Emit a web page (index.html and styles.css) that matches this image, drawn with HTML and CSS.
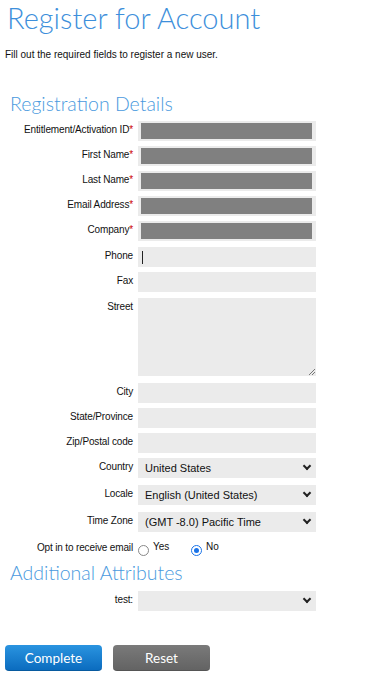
FILE: index.html
```html
<!DOCTYPE html>
<html lang="en">
<head>
    <meta charset="UTF-8">
    <meta name="viewport" content="width=device-width, initial-scale=1.0">
    <title>Register for Account</title>
    <link rel="stylesheet" href="styles.css">
</head>
<body>
    <h1 class="page-title">Register for Account</h1>
    <p class="intro">Fill out the required fields to register a new user.</p>

    <form class="reg-form">
        <h2 class="section-title">Registration Details</h2>

        <div class="form-row">
            <label>Entitlement/Activation ID<span class="req">*</span></label>
            <div class="field"><div class="redacted"></div></div>
        </div>
        <div class="form-row">
            <label>First Name<span class="req">*</span></label>
            <div class="field"><div class="redacted"></div></div>
        </div>
        <div class="form-row">
            <label>Last Name<span class="req">*</span></label>
            <div class="field"><div class="redacted"></div></div>
        </div>
        <div class="form-row">
            <label>Email Address<span class="req">*</span></label>
            <div class="field"><div class="redacted"></div></div>
        </div>
        <div class="form-row gap-6">
            <label>Company<span class="req">*</span></label>
            <div class="field"><div class="redacted"></div></div>
        </div>
        <div class="form-row">
            <label>Phone</label>
            <div class="field"><span class="caret"></span></div>
        </div>
        <div class="form-row gap-6">
            <label>Fax</label>
            <div class="field"></div>
        </div>
        <div class="form-row gap-7">
            <label>Street</label>
            <div class="field textarea">
                <svg class="grip" width="7" height="7" viewBox="0 0 7 7">
                    <path d="M1 7L7 1M4 7L7 4" stroke="#777" stroke-width="1"/>
                </svg>
            </div>
        </div>
        <div class="form-row">
            <label>City</label>
            <div class="field"></div>
        </div>
        <div class="form-row">
            <label>State/Province</label>
            <div class="field"></div>
        </div>
        <div class="form-row">
            <label>Zip/Postal code</label>
            <div class="field"></div>
        </div>
        <div class="form-row gap-7">
            <label>Country</label>
            <div class="field select"><span>United States</span><span class="chev"></span></div>
        </div>
        <div class="form-row gap-7">
            <label>Locale</label>
            <div class="field select"><span>English (United States)</span><span class="chev"></span></div>
        </div>
        <div class="form-row">
            <label>Time Zone</label>
            <div class="field select"><span>(GMT -8.0) Pacific Time</span><span class="chev"></span></div>
        </div>
        <div class="form-row radio-row">
            <label>Opt in to receive email</label>
            <div class="radios">
                <span class="radio-opt"><span class="radio"></span>Yes</span>
                <span class="radio-opt"><span class="radio on"></span>No</span>
            </div>
        </div>

        <h2 class="section-title second">Additional Attributes</h2>
        <div class="form-row">
            <label>test:</label>
            <div class="field select"><span></span><span class="chev"></span></div>
        </div>

        <div class="actions">
            <button type="button" class="btn btn-blue">Complete</button>
            <button type="button" class="btn btn-gray">Reset</button>
        </div>
    </form>
</body>
</html>
```

FILE: styles.css
```css
body {
    font-family: 'Liberation Sans', Arial, sans-serif;
    margin: 0;
    padding: 0 5px;
    color: #111;
    background: #fff;
}

.page-title {
    font-family: 'Lato', sans-serif;
    font-weight: 300;
    font-size: 29px;
    color: #3d8fdb;
    margin: 0;
    padding: 0 0 0 2px;
    line-height: 36px;
}

.intro {
    font-size: 10px;
    line-height: 12px;
    margin: 13px 0 0 0;
}

.section-title {
    font-family: 'Lato', sans-serif;
    font-weight: 300;
    font-size: 19.5px;
    color: #4a9ade;
    margin: 31px 0 5px 5px;
    line-height: 24px;
}

.section-title.second {
    margin: 5px 0 6px 5px;
}

.form-row {
    display: grid;
    grid-template-columns: 128px 178px;
    column-gap: 5px;
    margin-bottom: 5px;
}

.form-row.gap-6 {
    margin-bottom: 6px;
}

.form-row.gap-7 {
    margin-bottom: 7px;
}

.form-row label {
    text-align: right;
    font-size: 10px;
    letter-spacing: -0.15px;
    line-height: 12px;
    padding-top: 3px;
}

.req {
    color: #c00;
}

.field {
    background: #ebebeb;
    height: 20px;
    position: relative;
    display: flex;
    align-items: center;
}

.redacted {
    background: #808080;
    height: 16px;
    margin: 0 4px 0 3px;
    flex: 1;
}

.caret {
    width: 1px;
    height: 13px;
    background: #222;
    margin-left: 4px;
}

.textarea {
    height: 78px;
}

.grip {
    position: absolute;
    right: 1px;
    bottom: 1px;
}

.select {
    justify-content: space-between;
    padding: 0 6px 0 7px;
    font-size: 11px;
}

.chev {
    width: 4px;
    height: 4px;
    border-right: 2px solid #222;
    border-bottom: 2px solid #222;
    transform: rotate(45deg);
    margin-top: -4px;
}

.radio-row {
    margin: 5px 0 0;
    height: 19px;
}

.radio-row label {
    padding-top: 5px;
}

.radios {
    display: flex;
    font-size: 10px;
    padding-top: 4px;
}

.radio-opt {
    display: flex;
    align-items: flex-start;
    gap: 4px;
    width: 53px;
}

.radio {
    width: 11px;
    height: 11px;
    border: 1px solid #888;
    border-radius: 50%;
    margin-top: 4px;
    box-sizing: border-box;
    position: relative;
}

.radio.on {
    border-color: #1a73e8;
}

.radio.on::after {
    content: "";
    position: absolute;
    left: 2px;
    top: 2px;
    width: 5px;
    height: 5px;
    border-radius: 50%;
    background: #1a73e8;
}

.actions {
    display: flex;
    gap: 11px;
    margin-top: 34px;
}

.btn {
    font-family: 'Lato', sans-serif;
    font-size: 13.5px;
    color: #fff;
    height: 26px;
    width: 97px;
    border-radius: 4px;
    border: none;
    cursor: pointer;
    padding: 0;
}

.btn-blue {
    background: linear-gradient(#2a94e0, #0b6cbf);
    border-bottom: 1px solid #075a9f;
}

.btn-gray {
    background: linear-gradient(#7a7a7a, #636363);
    border-bottom: 1px solid #555;
}
```
